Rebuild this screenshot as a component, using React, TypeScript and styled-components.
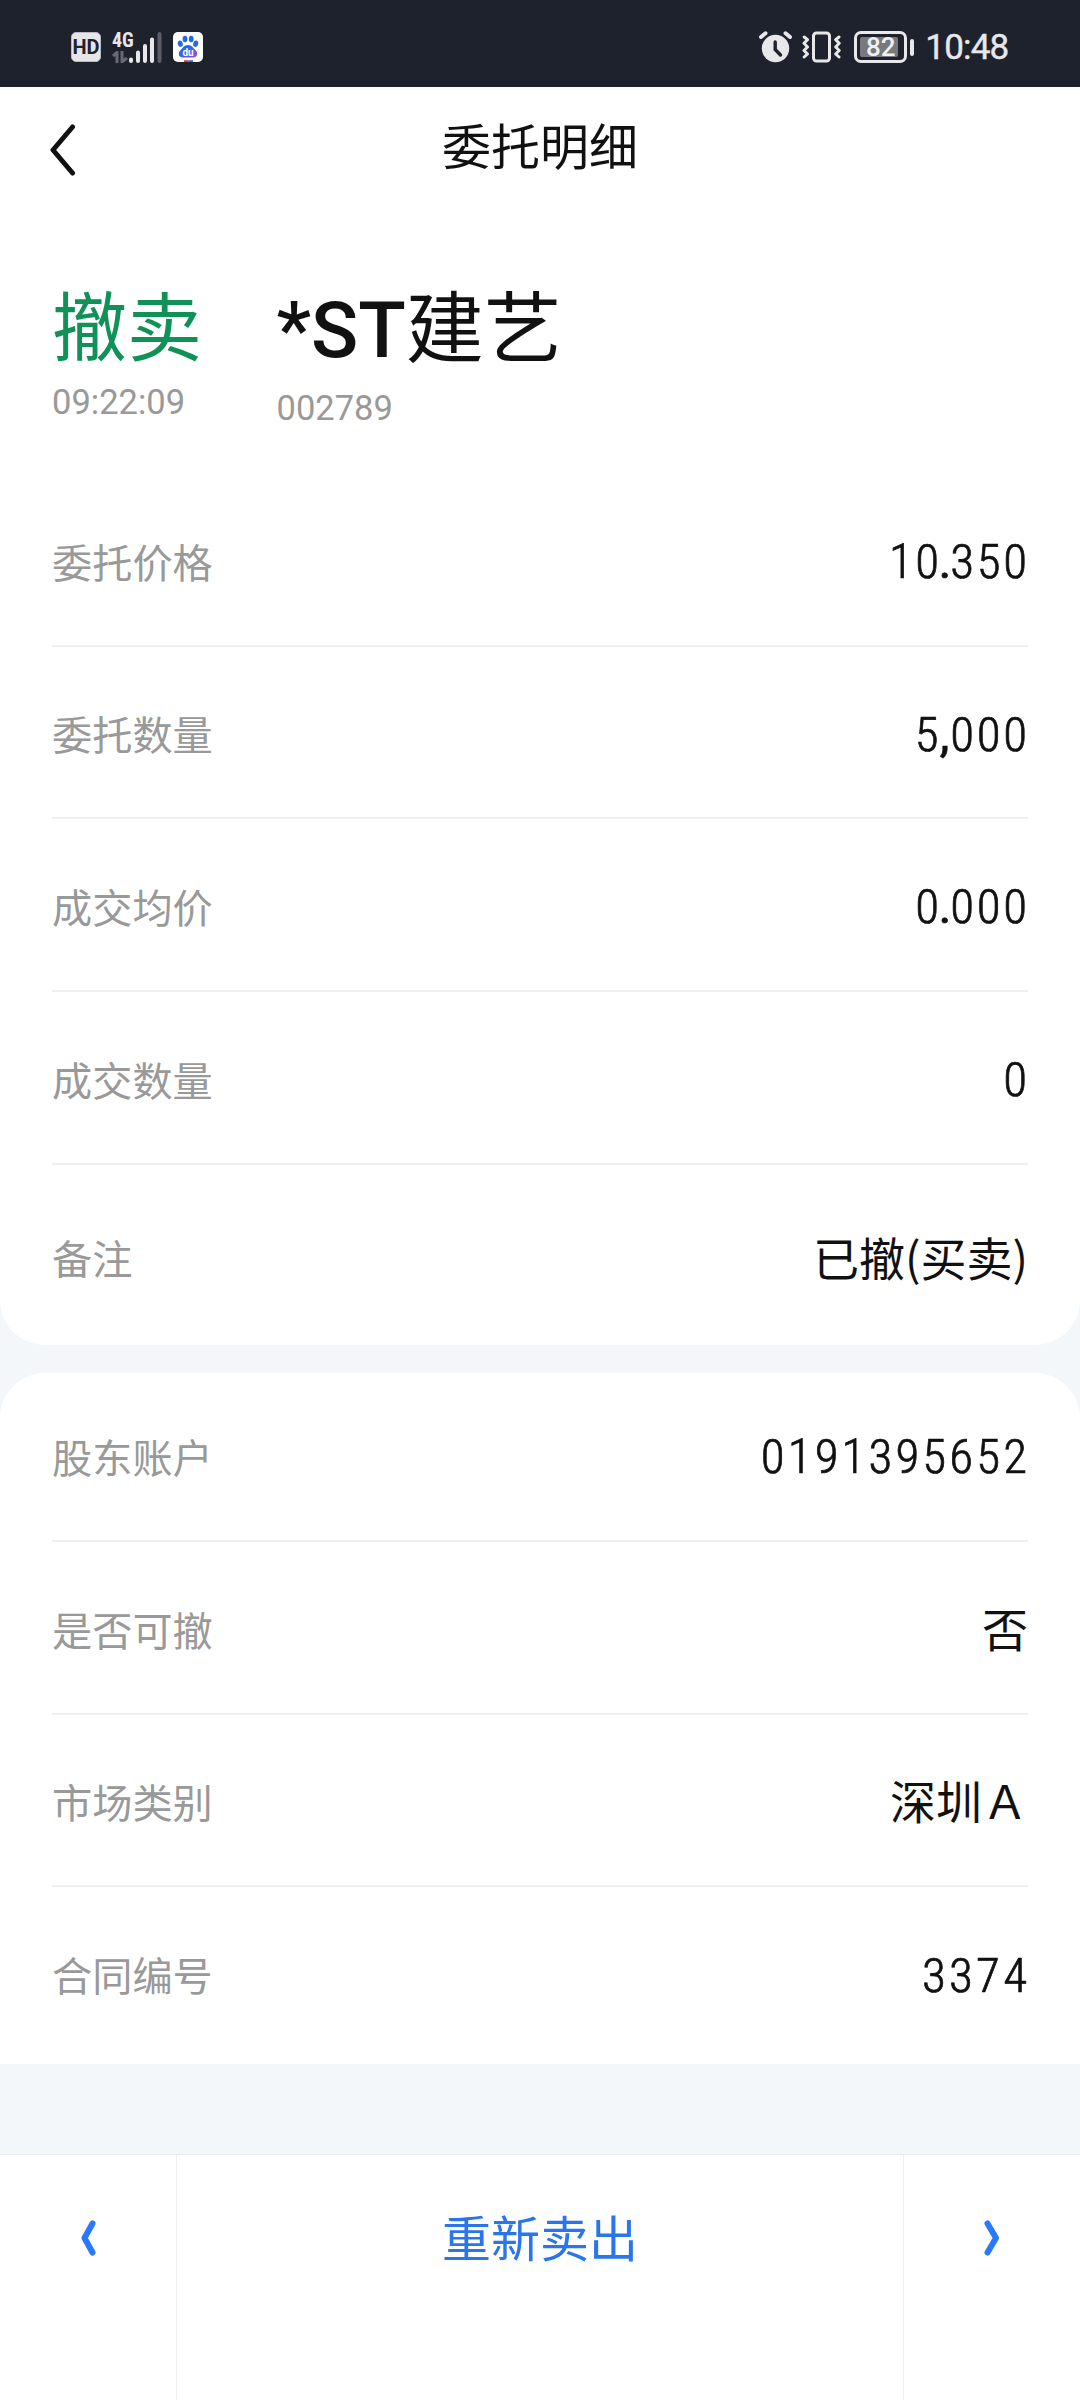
import React from 'react';
import styled, { createGlobalStyle } from 'styled-components';

const cjk = '"Noto Sans CJK SC", sans-serif';

const GlobalStyle = createGlobalStyle`
  * { box-sizing: border-box; }
  body {
    margin: 0;
    background: #f3f7fa;
    font-family: Roboto, ${cjk};
    color: #111;
  }
`;

const Screen = styled.div`
  width: 1080px;
  height: 2400px;
  display: flex;
  flex-direction: column;
  overflow: hidden;
`;

const StatusBar = styled.header`
  height: 87px;
  flex: none;
  display: flex;
  justify-content: space-between;
  align-items: center;
  padding: 7px 71px 0;
  background: #1e222d;
  color: #e8e8ea;
`;

const StatusGroup = styled.div`
  display: flex;
  align-items: center;
`;

const HdBadge = styled.span`
  width: 30px;
  height: 30px;
  border-radius: 5px;
  background: #e6e6e8;
  color: #1f232e;
  border: 1px solid #b8bac0;
  font: 700 20px/29px Roboto, sans-serif;
  font-stretch: 88%;
  text-align: center;
`;

const Network = styled.div`
  display: flex;
  align-items: flex-end;
  height: 31px;
  margin: 0 11px 0 11px;
`;

const NetworkType = styled.div`
  display: flex;
  flex-direction: column;
  width: 17px;
  height: 31px;
  font: 700 20px/16px Roboto, sans-serif;
  font-stretch: 75%;

  svg { margin-top: 3px; }
`;

const Icons = styled.div`
  display: flex;
  align-items: center;
  gap: 10px;
`;

const Battery = styled.div`
  display: flex;
  align-items: center;
  gap: 3px;
  margin: 0 11px 0 12px;
`;

const BatteryShell = styled.div`
  width: 53px;
  height: 32px;
  padding: 3px;
  border: 3px solid #e8e8ea;
  border-radius: 7px;
`;

const BatteryLevel = styled.div`
  width: 38px;
  height: 20px;
  border-radius: 2px;
  background: #77797f;
  font: 500 26px/20px Roboto, sans-serif;
  text-align: center;
  padding-left: 3px;
  color: #f0f0f0;
`;

const BatteryTip = styled.div`
  width: 4px;
  height: 17px;
  border-radius: 2px;
  background: #e8e8ea;
`;

const Clock = styled.time`
  font: 400 35px/40px Roboto, sans-serif;
  letter-spacing: -0.8px;
  margin-right: 0.5px;
  padding-top: 1px;
  -webkit-text-stroke: 0.4px currentColor;
`;

const TitleBar = styled.div`
  height: 123px;
  flex: none;
  display: grid;
  grid-template-columns: 100px 1fr 100px;
  align-items: center;
  padding: 0 0 1px;
  background: #fff;
`;

const BackButton = styled.button`
  display: flex;
  border: 0;
  background: none;
  padding: 4px 0 0 49px;
`;

const Title = styled.h1`
  margin: 0;
  padding-bottom: 8px;
  font: 400 49px/60px ${cjk};
  text-align: center;
`;

const Card = styled.section<{ $shape: 'top' | 'bottom' }>`
  flex: none;
  background: #fff;
  padding: 0 52px;
  border-radius: ${p => (p.$shape === 'top' ? '0 0 45px 45px' : '45px 45px 0 0')};
  height: ${p => (p.$shape === 'top' ? '1135px' : '691px')};
  margin-bottom: ${p => (p.$shape === 'top' ? '28px' : '90px')};
`;

const Summary = styled.div`
  display: flex;
  gap: 74.5px;
  height: 264px;
  padding-top: 65px;
`;

const SummaryCell = styled.div`
  display: flex;
  flex-direction: column;
`;

const Side = styled.span`
  font: 400 75px/96px ${cjk};
  margin-bottom: 8px;
  color: #0f9158;
`;

const StockName = styled.span`
  font: 500 78px/102px Roboto, ${cjk};
  margin: 5px 0 3px;
  white-space: nowrap;
`;

const StockCjk = styled.span`
  font-weight: 400;
`;

const Sub = styled.span`
  font: 400 34.5px/46px Roboto, sans-serif;
  color: #999;
`;

const Row = styled.div<{ $height?: number; $line?: boolean; $top?: number; $bottom?: number }>`
  display: flex;
  align-items: center;
  justify-content: space-between;
  height: ${p => p.$height ?? 172.7}px;
  padding-top: ${p => p.$top ?? 2.5}px;
  padding-bottom: ${p => p.$bottom ?? 0}px;
  border-bottom: ${p => (p.$line ? '2px solid #efefef' : '0')};
`;

const Label = styled.span`
  font: 400 40.2px/58px ${cjk};
  color: #999;
`;

const TextValue = styled.span<{ $lift?: number }>`
  font: 400 46px/60px ${cjk};
  padding-bottom: ${p => p.$lift ?? 0}px;
`;

const NumberValue = styled.span<{ $spacing: number }>`
  font: 300 49px/60px Roboto, sans-serif;
  font-stretch: 75%;
  -webkit-text-stroke: 0.7px currentColor;
  letter-spacing: ${p => p.$spacing}px;
  margin-right: ${p => 1 - p.$spacing}px;
  padding-top: 3px;
`;

const Separator = styled.span<{ $tight: boolean }>`
  letter-spacing: ${p => (p.$tight ? -1 : 1)}px;
  margin-left: ${p => (p.$tight ? -3.4 : -1.5)}px;
  font-weight: 400;
`;

const Footer = styled.nav`
  flex: 1;
  display: grid;
  grid-template-columns: 177px 1fr 177px;
  background: #fff;
  border-top: 1px solid #ebebeb;
`;

const FooterButton = styled.button<{ $divided?: boolean }>`
  display: flex;
  justify-content: center;
  align-items: flex-start;
  padding: 65px 0 0;
  border: 0 solid #eee;
  border-width: ${p => (p.$divided ? '0 1px' : '0')};
  margin: ${p => (p.$divided ? '0 -1px' : '0')};
  background: none;
  color: #2a75ec;
`;

const FooterText = styled.span`
  font: 400 49px/60px ${cjk};
  margin-top: -14px;
`;

type Field = { label: string; value: string; spacing?: number; lift?: number };

const orderRows: Field[] = [
  { label: '委托价格', value: '10.350', spacing: 2.6 },
  { label: '委托数量', value: '5,000', spacing: 2.6 },
  { label: '成交均价', value: '0.000', spacing: 2.6 },
  { label: '成交数量', value: '0', spacing: 2.6 },
  { label: '备注', value: '已撤(买卖)', lift: 1 },
];

const accountRows: Field[] = [
  { label: '股东账户', value: '0191395652', spacing: 3.1 },
  { label: '是否可撤', value: '否', lift: 4 },
  { label: '市场类别', value: '深圳Ａ', lift: 4 },
  { label: '合同编号', value: '3374', spacing: 3.2 },
];

const FieldValue = ({ value, spacing, lift }: Field) =>
  spacing === undefined ? (
    <TextValue $lift={lift}>{value}</TextValue>
  ) : (
    <NumberValue $spacing={spacing}>
      {value.split(/([.,])/).map((part, i) =>
        i % 2 ? <Separator key={i} $tight={part === '.'}>{part}</Separator> : part,
      )}
    </NumberValue>
  );

const SignalArrows = () => (
  <svg width="16" height="12" viewBox="0 0 16 12" fill="none" stroke="#686b74" strokeWidth="3">
    <path d="M1 5 5 1.5V12M10 0v11l5-4" />
  </svg>
);

const SignalBars = () => (
  <svg width="33" height="31" viewBox="0 0 33 31" strokeWidth="4" strokeLinecap="round" stroke="#e8e8ea">
    <path d="M2 27.5V29M9 20.5V29M16 14V29M23 7.5V29" />
    <path d="M30.5 2V29" stroke="#5b5e68" />
  </svg>
);

const PawIcon = () => (
  <svg width="30" height="30" viewBox="0 0 30 30">
    <defs>
      <linearGradient id="paw" x1="0" y1="0" x2="1" y2="1">
        <stop offset=".35" stopColor="#2468e8" />
        <stop offset="1" stopColor="#a34ae0" />
      </linearGradient>
    </defs>
    <rect width="30" height="30" rx="5" fill="#fff" />
    <g fill="#2468e8">
      <ellipse cx="7.3" cy="11.7" rx="2.5" ry="3.2" transform="rotate(-12 7.3 11.7)" />
      <ellipse cx="12" cy="7" rx="2.4" ry="3.3" />
      <ellipse cx="18.2" cy="7" rx="2.4" ry="3.3" />
      <ellipse cx="22.7" cy="11.7" rx="2.5" ry="3.2" transform="rotate(12 22.7 11.7)" />
    </g>
    <path d="M15 13c4 0 5 3 7.5 5.2 3 2.8 1.8 7.3-2.3 7.3H9.8c-4.1 0-5.3-4.5-2.3-7.3C10 16 11 13 15 13z" fill="url(#paw)" />
    <text x="15" y="23.5" textAnchor="middle" fontFamily="Roboto, sans-serif" fontSize="10" fontWeight="700" fill="#fff">du</text>
    <path d="M11 28.2h4.5V30H11z" fill="#e23a3a" />
    <path d="M15.5 28.2H20V30h-4.5z" fill="#3a66e2" />
  </svg>
);

const AlarmIcon = () => (
  <svg width="33" height="32" viewBox="0 0 33 32" fill="none" strokeLinecap="round">
    <circle cx="16.5" cy="17.5" r="13.7" fill="#e8e8ea" />
    <path d="M2 6 6.5 2.3M31 6 26.5 2.3" stroke="#e8e8ea" strokeWidth="4" />
    <path d="M16.2 11v7.5l5.3 5.5" stroke="#1f232e" strokeWidth="3.4" />
  </svg>
);

const VibrateIcon = () => (
  <svg width="40" height="32" viewBox="0 0 40 32" fill="none" stroke="#e8e8ea" strokeWidth="3" strokeLinecap="round" strokeLinejoin="round">
    <rect x="11.5" y="2" width="16" height="28" rx="3" />
    <path d="M2.2 6 5.5 8.7 2 12.3 5.5 16 2 19.5 5.5 23 2.2 26M37 6 33.7 8.7 37.2 12.3 33.7 16 37.2 19.5 33.7 23 37 26" />
  </svg>
);

const StepArrow = ({ flip }: { flip?: boolean }) => (
  <svg width="16" height="36" viewBox="0 0 16 36" fill="none" stroke="#2a79fb" strokeWidth="6" strokeLinecap="round" strokeLinejoin="round">
    <path d={flip ? 'M3.5 3.5 12 18 3.5 32.5' : 'M11.5 3.5 3.5 18 11.5 32.5'} />
  </svg>
);

export default function App() {
  return (
    <>
      <GlobalStyle />
      <Screen>
        <StatusBar>
          <StatusGroup>
            <HdBadge>HD</HdBadge>
            <Network>
              <NetworkType>4G<SignalArrows /></NetworkType>
              <SignalBars />
            </Network>
            <PawIcon />
          </StatusGroup>
          <StatusGroup>
            <Icons>
              <AlarmIcon />
              <VibrateIcon />
            </Icons>
            <Battery>
              <BatteryShell><BatteryLevel>82</BatteryLevel></BatteryShell>
              <BatteryTip />
            </Battery>
            <Clock>10:48</Clock>
          </StatusGroup>
        </StatusBar>
        <TitleBar>
          <BackButton aria-label="返回">
            <svg width="28" height="52" viewBox="0 0 28 52" fill="none" stroke="#111" strokeWidth="5" strokeLinecap="round" strokeLinejoin="round">
              <path d="M23.5 3 4 26 23.5 49" />
            </svg>
          </BackButton>
          <Title>委托明细</Title>
        </TitleBar>
        <Card $shape="top">
          <Summary>
            <SummaryCell>
              <Side>撤卖</Side>
              <Sub>09:22:09</Sub>
            </SummaryCell>
            <SummaryCell>
              <StockName>*ST<StockCjk>建艺</StockCjk></StockName>
              <Sub>002789</Sub>
            </SummaryCell>
          </Summary>
          {orderRows.map((r, i) => (
            <Row key={r.label} $line={i < 4} $height={i === 4 ? 180 : undefined} $top={i === 4 ? 4 : undefined}>
              <Label>{r.label}</Label>
              <FieldValue {...r} />
            </Row>
          ))}
        </Card>
        <Card $shape="bottom">
          {accountRows.map((r, i) => (
            <Row
              key={r.label}
              $line={i < 3}
              $height={i === 0 ? 169 : undefined}
              $top={i === 0 ? 0 : i === 3 ? 1 : undefined}
              $bottom={i === 0 ? 1.5 : 0}
            >
              <Label>{r.label}</Label>
              <FieldValue {...r} />
            </Row>
          ))}
        </Card>
        <Footer>
          <FooterButton aria-label="上一条"><StepArrow /></FooterButton>
          <FooterButton $divided><FooterText>重新卖出</FooterText></FooterButton>
          <FooterButton aria-label="下一条"><StepArrow flip /></FooterButton>
        </Footer>
      </Screen>
    </>
  );
}
